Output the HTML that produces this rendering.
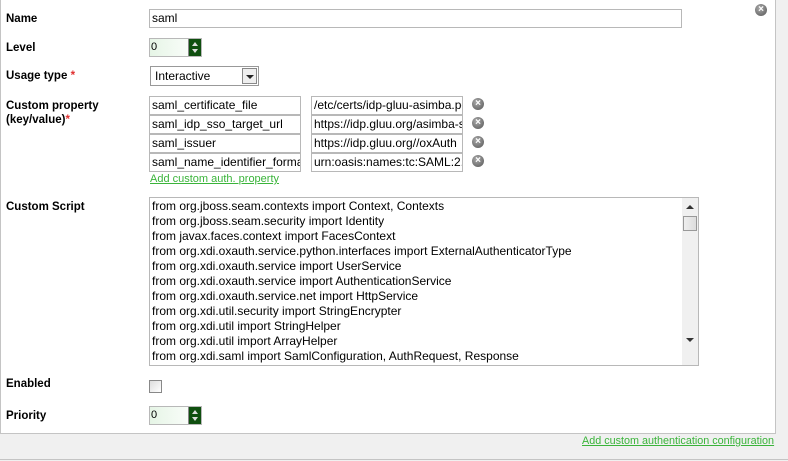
<!DOCTYPE html>
<html><head><meta charset="utf-8"><style>
*{box-sizing:border-box;margin:0;padding:0}
body{width:788px;height:461px;background:#f0f0f0;position:relative;overflow:hidden;font-family:"Liberation Sans",Arial,sans-serif}
.panel{position:absolute;left:0;top:-2px;width:776px;height:436px;background:#fff;border:1px solid #c4c4c4}
.lbl{position:absolute;left:6px;font-size:11.5px;font-weight:bold;color:#000;line-height:14px}
.req{color:#e03030;font-weight:bold}
.inp{position:absolute;border:1px solid #b8b8b8;background:#fff;font-size:12px;line-height:16px;padding-left:2px;white-space:nowrap;overflow:hidden;color:#000}
.x{position:absolute;width:12px;height:12px;border-radius:50%;background:radial-gradient(circle at 40% 35%,#aaa,#555);color:#fff;font-size:10px;line-height:12px;text-align:center;font-weight:bold}
.spin{position:absolute;width:53px;height:19px;border:1px solid #b8b8b8;background:linear-gradient(90deg,#e6f5e6,#fff);font-size:11px;padding-left:1px;line-height:16px;color:#000}
.spin b{position:absolute;right:0;top:0;width:13px;height:17px;background:#0f4f0f;border-left:1px solid #888}
.spin b:before{content:"";position:absolute;left:3px;top:3px;border:3px solid transparent;border-bottom:4px solid #ddd;border-top:0}
.spin b:after{content:"";position:absolute;left:3px;top:10px;border:3px solid transparent;border-top:4px solid #ddd;border-bottom:0}
.ta{position:absolute;left:149px;top:197px;width:550px;height:169px;border:1px solid #b8b8b8;font-size:12px;line-height:15px;padding:1px 2px;color:#000}
.sb{position:absolute;right:0;top:0;width:16px;height:167px;background:#f0f0f0}
a.g{color:#3ab43a;text-decoration:underline;font-size:11px;position:absolute}
</style></head><body>
<div class="panel"></div>
<div class="x" style="left:755px;top:4px">×</div>
<div class="lbl" style="top:12px">Name</div>
<div class="inp" style="left:149px;top:9px;width:533px;height:19px">saml</div>
<div class="lbl" style="top:41px">Level</div>
<div class="spin" style="left:149px;top:38px">0<b></b></div>
<div class="lbl" style="top:69px">Usage type <span class="req">*</span></div>
<div class="inp" style="left:150px;top:66px;width:109px;height:20px;border:1px solid #999;padding-left:4px;line-height:18px">Interactive<span style="position:absolute;right:1px;top:1px;width:15px;height:16px;border:1px solid #888;background:#eee"><span style="position:absolute;left:3px;top:6px;border:4px solid transparent;border-top:4px solid #222;border-bottom:0"></span></span></div>
<div class="lbl" style="top:99px">Custom property<br>(key/value)<span class="req">*</span></div>
<div class="inp" style="left:149px;top:96px;width:152px;height:19px">saml_certificate_file</div>
<div class="inp" style="left:149px;top:115px;width:152px;height:19px">saml_idp_sso_target_url</div>
<div class="inp" style="left:149px;top:134px;width:152px;height:19px">saml_issuer</div>
<div class="inp" style="left:149px;top:153px;width:152px;height:19px">saml_name_identifier_format</div>
<div class="inp" style="left:311px;top:96px;width:152px;height:19px">/etc/certs/idp-gluu-asimba.pem</div>
<div class="inp" style="left:311px;top:115px;width:152px;height:19px">https://idp.gluu.org/asimba-saml</div>
<div class="inp" style="left:311px;top:134px;width:152px;height:19px">https://idp.gluu.org//oxAuth</div>
<div class="inp" style="left:311px;top:153px;width:152px;height:19px">urn:oasis:names:tc:SAML:2.0</div>
<div class="x" style="left:472px;top:98px">×</div>
<div class="x" style="left:472px;top:117px">×</div>
<div class="x" style="left:472px;top:136px">×</div>
<div class="x" style="left:472px;top:155px">×</div>
<a class="g" style="left:150px;top:173px">Add custom auth. property</a>
<div class="lbl" style="top:200px">Custom Script</div>
<div class="ta">from org.jboss.seam.contexts import Context, Contexts<br>from org.jboss.seam.security import Identity<br>from javax.faces.context import FacesContext<br>from org.xdi.oxauth.service.python.interfaces import ExternalAuthenticatorType<br>from org.xdi.oxauth.service import UserService<br>from org.xdi.oxauth.service import AuthenticationService<br>from org.xdi.oxauth.service.net import HttpService<br>from org.xdi.util.security import StringEncrypter<br>from org.xdi.util import StringHelper<br>from org.xdi.util import ArrayHelper<br>from org.xdi.saml import SamlConfiguration, AuthRequest, Response
<div class="sb"><span style="position:absolute;left:4px;top:7px;border:4px solid transparent;border-bottom:4px solid #333;border-top:0"></span><span style="position:absolute;left:1px;top:18px;width:14px;height:15px;border:1px solid #999;background:linear-gradient(90deg,#eee,#ddd)"></span><span style="position:absolute;left:4px;top:140px;border:4px solid transparent;border-top:4px solid #333;border-bottom:0"></span></div></div>
<div class="lbl" style="top:377px">Enabled</div>
<div style="position:absolute;left:149px;top:380px;width:13px;height:13px;border:1px solid #888;background:linear-gradient(135deg,#ddd,#fff)"></div>
<div class="lbl" style="top:409px">Priority</div>
<div class="spin" style="left:149px;top:406px">0<b></b></div>
<a class="g" style="left:582px;top:435px;font-size:10.8px">Add custom authentication configuration</a>
<div style="position:absolute;left:0;top:459px;width:788px;height:1px;background:#c4c4c4"></div>
</body></html>
